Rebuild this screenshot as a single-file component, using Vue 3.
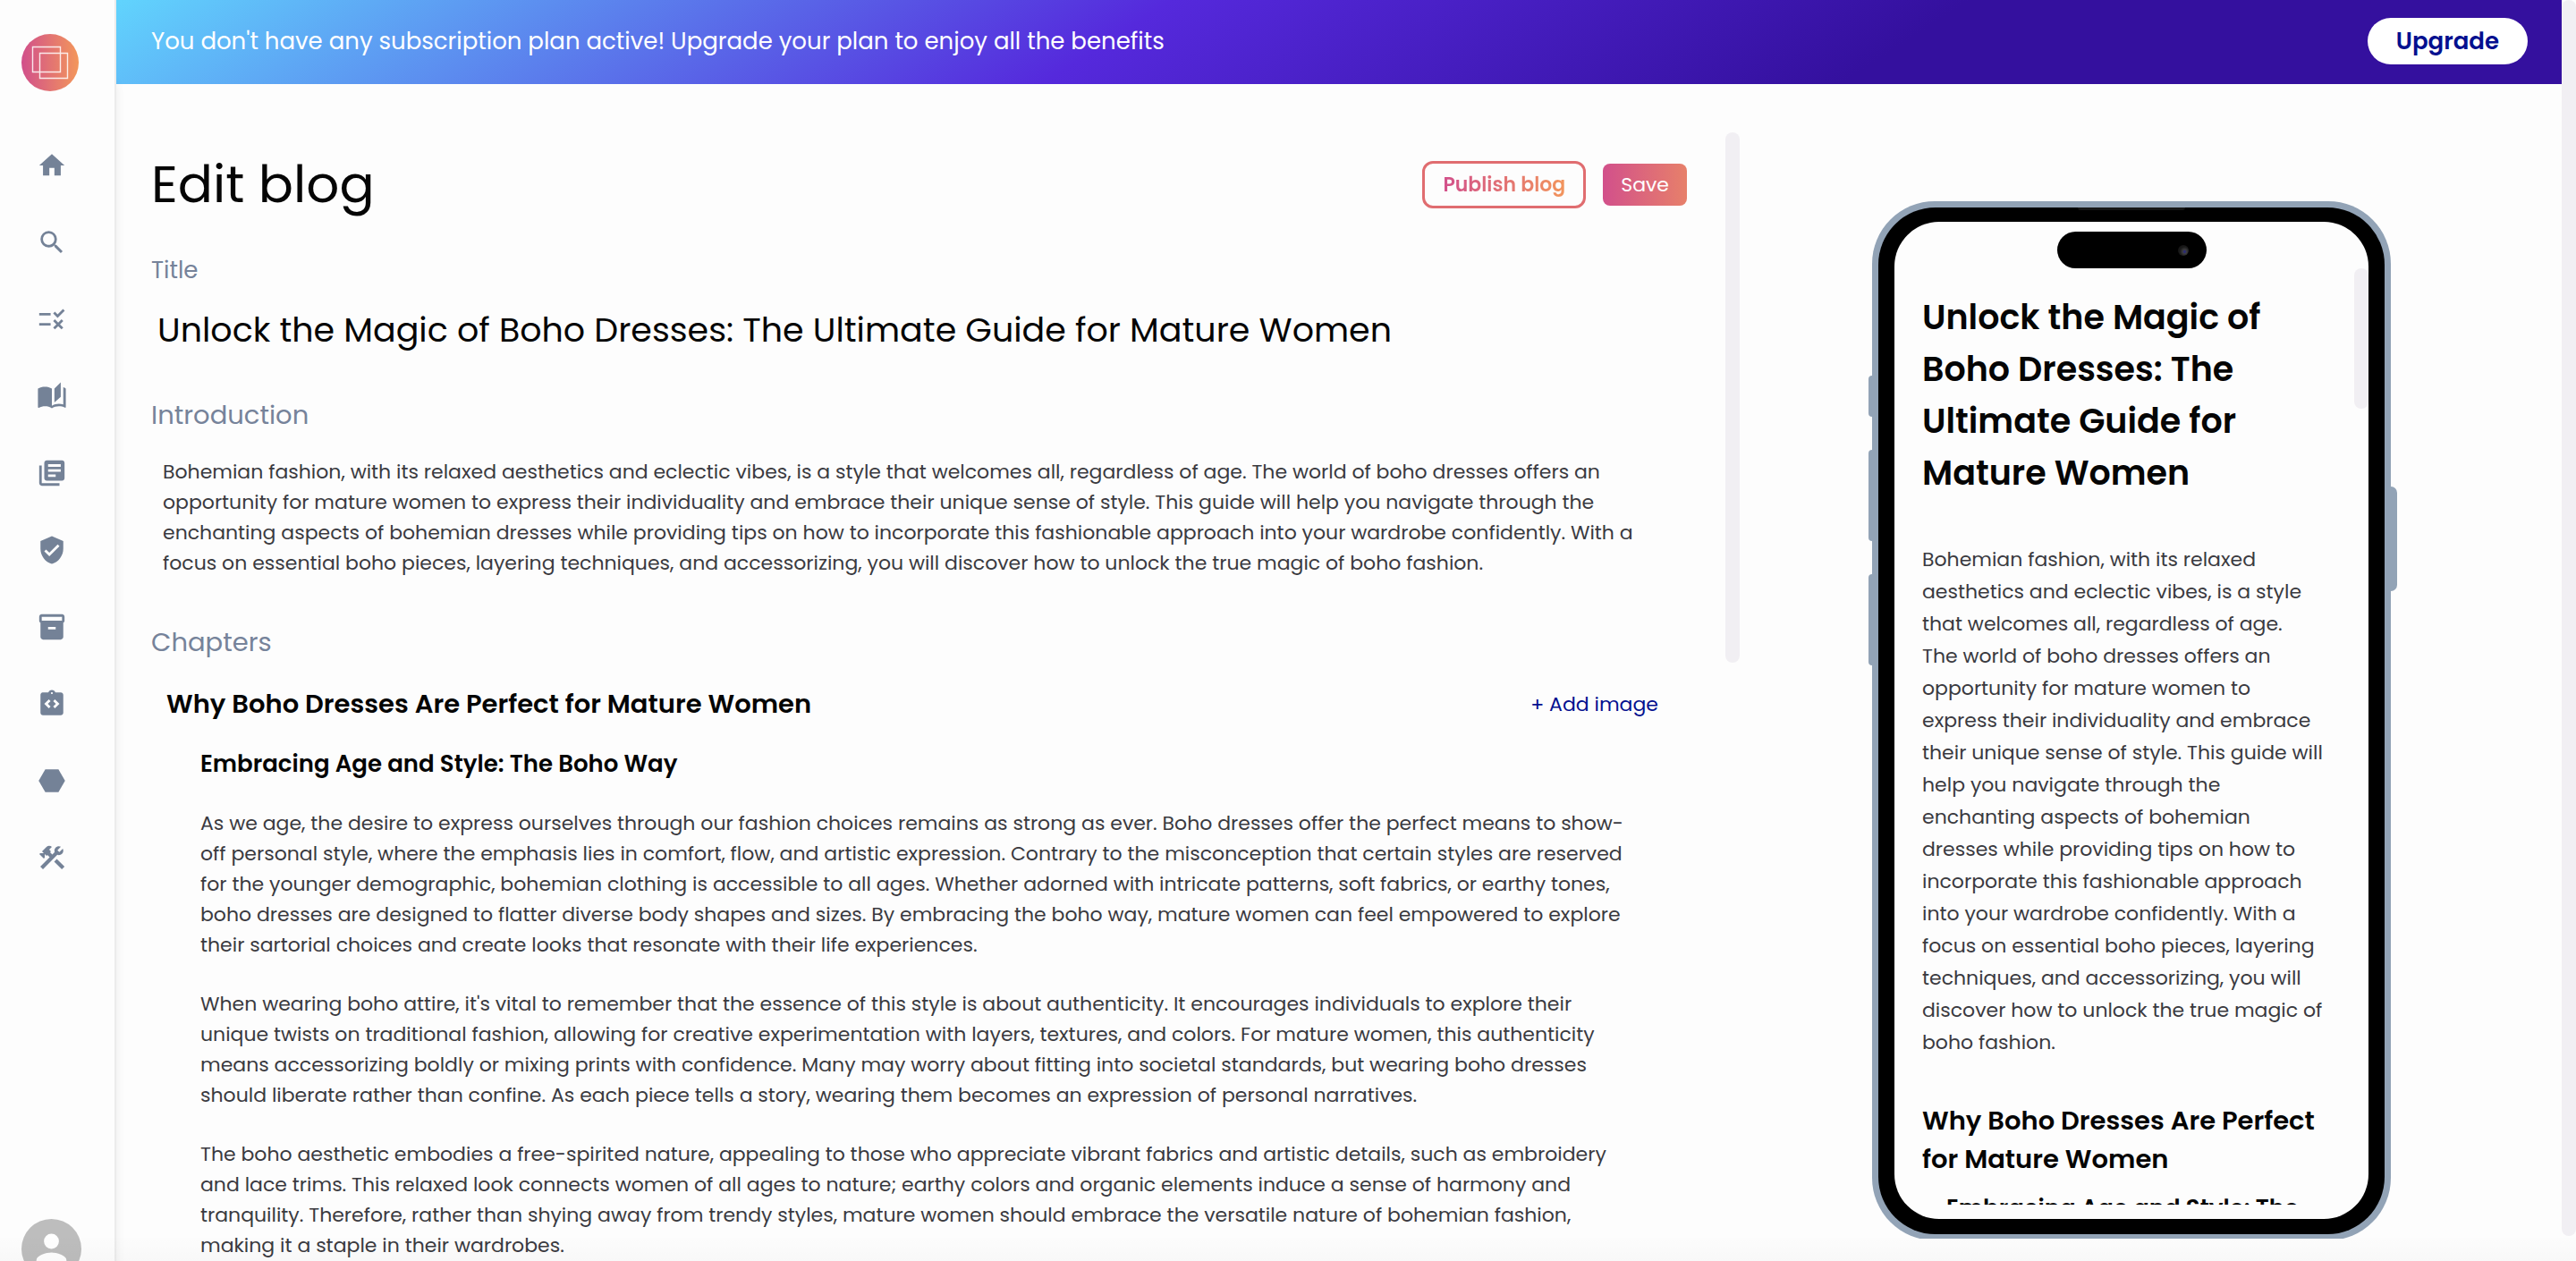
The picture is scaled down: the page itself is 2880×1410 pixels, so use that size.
<template>
  <div class="app">
    <aside class="sidebar">
      <a href="#" class="logo" aria-label="Dashboard">
        <svg viewBox="0 0 64 64">
          <defs>
            <linearGradient id="logo-bg" x1="0" x2="1" y1="0" y2="0">
              <stop offset="0" stop-color="#d14f8b" />
              <stop offset="1" stop-color="#f3975b" />
            </linearGradient>
          </defs>
          <circle cx="32" cy="32" r="32" fill="url(#logo-bg)" />
          <path
            d="M12.5 14.5h31v28h-31zM20.5 21.5h31v28h-31z"
            fill="none"
            stroke="#fff"
            stroke-opacity=".85"
            stroke-width="1.4"
          />
        </svg>
      </a>

      <nav class="nav">
        <a v-for="item in navItems" :key="item.name" href="#" class="nav-link" :aria-label="item.name">
          <svg viewBox="0 0 24 24"><path :d="item.icon" /></svg>
        </a>
      </nav>

      <button type="button" class="avatar" aria-label="Account">
        <svg viewBox="0 0 67 67">
          <circle cx="33.5" cy="33.5" r="33.5" fill="#bdbdbd" />
          <circle cx="33.5" cy="25" r="8.4" fill="#fff" />
          <path d="M16.7 46c0-5.6 11.2-8.6 16.8-8.6s16.8 3 16.8 8.6v4.2H16.7z" fill="#fff" />
        </svg>
      </button>
    </aside>

    <div class="page">
      <header class="banner">
        <p>You don't have any subscription plan active! Upgrade your plan to enjoy all the benefits</p>
        <button type="button" class="upgrade">Upgrade</button>
      </header>

      <main class="content">
        <section class="editor">
          <form class="form" @submit.prevent>
            <div class="form-head">
              <h1>Edit blog</h1>
              <div class="actions">
                <button type="button" class="publish"><span>Publish blog</span></button>
                <button type="submit" class="save">Save</button>
              </div>
            </div>

            <label for="title" class="label-small">Title</label>
            <input id="title" v-model="title" type="text" class="title-input" />

            <label for="intro" class="label">Introduction</label>
            <textarea id="intro" v-model="intro" rows="4" class="intro-input"></textarea>

            <h2 class="label chapters-label">Chapters</h2>
            <article v-for="chapter in chapters" :key="chapter.title" class="chapter">
              <div class="chapter-head">
                <h3>{{ chapter.title }}</h3>
                <button type="button" class="add-image">+ Add image</button>
              </div>
              <div class="chapter-body">
                <h4>{{ chapter.subtitle }}</h4>
                <p v-for="(text, index) in chapter.paragraphs" :key="index">{{ text }}</p>
              </div>
            </article>
          </form>
          <div class="thumb editor-thumb"></div>
        </section>

        <section class="preview">
          <div class="phone">
            <span class="side-button mute"></span>
            <span class="side-button volume-up"></span>
            <span class="side-button volume-down"></span>
            <span class="side-button power"></span>
            <div class="bezel">
              <span class="speaker"></span>
              <div class="screen">
                <div class="island"><span class="camera"></span></div>
                <div class="screen-scroll">
                  <div class="post">
                    <h2>{{ title }}</h2>
                    <p>{{ previewIntro }}</p>
                    <template v-for="chapter in chapters" :key="chapter.title">
                      <h3>{{ chapter.title }}</h3>
                      <h4>{{ chapter.subtitle }}</h4>
                    </template>
                  </div>
                  <div class="thumb screen-thumb"></div>
                </div>
              </div>
            </div>
          </div>
        </section>
      </main>
    </div>

    <div class="thumb page-thumb"></div>
    <div class="bottom-fade"></div>
  </div>
</template>

<script setup>
import { ref, computed } from 'vue';

const navItems = [
  { name: 'Home', icon: 'M10 20v-6h4v6h5v-8h3L12 3 2 12h3v8z' },
  {
    name: 'Search',
    icon: 'M15.5 14h-.79l-.28-.27A6.471 6.471 0 0 0 16 9.5 6.5 6.5 0 1 0 9.5 16c1.61 0 3.09-.59 4.23-1.57l.27.28v.79l5 4.99L20.49 19l-4.99-5zm-6 0C7.01 14 5 11.99 5 9.5S7.01 5 9.5 5 14 7.01 14 9.5 11.99 14 9.5 14z'
  },
  {
    name: 'Rules',
    icon: 'M16.54 11 13 7.46l1.41-1.41 2.12 2.12 4.24-4.24 1.41 1.41L16.54 11zM11 7H2v2h9V7zm10 6.41L19.59 12 17 14.59 14.41 12 13 13.41 15.59 16 13 18.59 14.41 20 17 17.41 19.59 20 21 18.59 18.41 16 21 13.41zM11 15H2v2h9v-2z'
  },
  {
    name: 'Stories',
    icon: 'M19 1l-5 5v11l5-4.5V1zM1 6v14.65c0 .25.25.5.5.5.1 0 .15-.05.25-.05C3.1 20.45 5.05 20 6.5 20c1.95 0 4.05.4 5.5 1.5V6c-1.45-1.1-3.55-1.5-5.5-1.5S2.45 4.9 1 6zm22 13.5V6c-.6-.45-1.25-.75-2-1v13.5c-1.1-.35-2.3-.5-3.5-.5-1.7 0-4.15.65-5.5 1.5v2c1.35-.85 3.8-1.5 5.5-1.5 1.65 0 3.35.3 4.75 1.05.1.05.15.05.25.05.25 0 .5-.25.5-.5v-1.1z'
  },
  {
    name: 'Library',
    icon: 'M4 6H2v14c0 1.1.9 2 2 2h14v-2H4V6zm16-4H8c-1.1 0-2 .9-2 2v12c0 1.1.9 2 2 2h12c1.1 0 2-.9 2-2V4c0-1.1-.9-2-2-2zm-1 9H9V9h10v2zm-4 4H9v-2h6v2zm4-8H9V5h10v2z'
  },
  {
    name: 'Checks',
    icon: 'M12 1L3 5v6c0 5.55 3.84 10.74 9 12 5.16-1.26 9-6.45 9-12V5l-9-4zm-2 16l-4-4 1.41-1.41L10 14.17l6.59-6.59L18 9l-8 8z'
  },
  {
    name: 'Inventory',
    icon: 'M20 2H4c-1 0-2 .9-2 2v3.01c0 .72.43 1.34 1 1.69V20c0 1.1 1.1 2 2 2h14c.9 0 2-.9 2-2V8.7c.57-.35 1-.97 1-1.69V4c0-1.1-1-2-2-2zm-5 12H9v-2h6v2zm5-7H4V4h16v3z'
  },
  {
    name: 'Integrations',
    icon: 'M19 3h-4.18C14.4 1.84 13.3 1 12 1c-1.3 0-2.4.84-2.82 2H5c-.14 0-.27.01-.4.04-.39.08-.74.28-1.01.55-.18.18-.33.4-.43.64C3.06 4.46 3 4.72 3 5v14c0 1.1.9 2 2 2h14c1.1 0 2-.9 2-2V5c0-1.1-.9-2-2-2zm-8 11.17-1.41 1.42L6 12l3.59-3.59L11 9.83 8.83 12 11 14.17zm1-9.92c-.41 0-.75-.34-.75-.75s.34-.75.75-.75.75.34.75.75-.34.75-.75.75zm2.41 11.34L13 14.17 15.17 12 13 9.83l1.41-1.42L18 12l-3.59 3.59z'
  },
  { name: 'Modules', icon: 'M17.2 3H6.8l-5.2 9 5.2 9h10.4l5.2-9z' },
  {
    name: 'Tools',
    icon: 'M13.78 15.17l2.12-2.12 6.08 6.08-2.12 2.12zM17.5 10c1.93 0 3.5-1.57 3.5-3.5 0-.58-.16-1.12-.41-1.6l-2.7 2.7-1.49-1.49 2.7-2.7C18.62 3.16 18.08 3 17.5 3 15.57 3 14 4.57 14 6.5c0 .41.08.8.21 1.16l-1.85 1.85-1.78-1.78.71-.71-1.41-1.41L12 3.49c-1.17-1.17-3.07-1.17-4.24 0L4.22 7.03l1.41 1.41H2.81l-.71.71 3.54 3.54.71-.71V9.15l1.41 1.41.71-.71 1.78 1.78-7.41 7.41 2.12 2.12L16.34 9.79c.36.13.75.21 1.16.21z'
  }
];

const title = ref('Unlock the Magic of Boho Dresses: The Ultimate Guide for Mature Women');

const intro = ref(
  `Bohemian fashion, with its relaxed aesthetics and eclectic vibes, is a style that welcomes all, regardless of age. The world of boho dresses offers an
opportunity for mature women to express their individuality and embrace their unique sense of style. This guide will help you navigate through the
enchanting aspects of bohemian dresses while providing tips on how to incorporate this fashionable approach into your wardrobe confidently. With a
focus on essential boho pieces, layering techniques, and accessorizing, you will discover how to unlock the true magic of boho fashion.`
);

// the phone wraps the text itself, only the opening sentence keeps its own line
const previewIntro = computed(() => intro.value.replace(/\n/g, ' ').replace('. ', '.\n'));

const chapters = ref([
  {
    title: 'Why Boho Dresses Are Perfect for Mature Women',
    subtitle: 'Embracing Age and Style: The Boho Way',
    paragraphs: [
      `As we age, the desire to express ourselves through our fashion choices remains as strong as ever. Boho dresses offer the perfect means to show-
off personal style, where the emphasis lies in comfort, flow, and artistic expression. Contrary to the misconception that certain styles are reserved
for the younger demographic, bohemian clothing is accessible to all ages. Whether adorned with intricate patterns, soft fabrics, or earthy tones,
boho dresses are designed to flatter diverse body shapes and sizes. By embracing the boho way, mature women can feel empowered to explore
their sartorial choices and create looks that resonate with their life experiences.`,
      `When wearing boho attire, it's vital to remember that the essence of this style is about authenticity. It encourages individuals to explore their
unique twists on traditional fashion, allowing for creative experimentation with layers, textures, and colors. For mature women, this authenticity
means accessorizing boldly or mixing prints with confidence. Many may worry about fitting into societal standards, but wearing boho dresses
should liberate rather than confine. As each piece tells a story, wearing them becomes an expression of personal narratives.`,
      `The boho aesthetic embodies a free-spirited nature, appealing to those who appreciate vibrant fabrics and artistic details, such as embroidery
and lace trims. This relaxed look connects women of all ages to nature; earthy colors and organic elements induce a sense of harmony and
tranquility. Therefore, rather than shying away from trendy styles, mature women should embrace the versatile nature of bohemian fashion,
making it a staple in their wardrobes.`
    ]
  }
]);
</script>

<style>
body {
  background: #fdfdfd;
  overflow: hidden;
}
</style>

<style scoped>
.app {
  position: relative;
  display: flex;
  height: 100vh;
  overflow: hidden;
  color: #050505;
  font-family: Poppins, Inter, sans-serif;
}

.app * {
  box-sizing: border-box;
}

h1,
h2,
h3,
h4,
p {
  margin: 0;
}

button,
input,
textarea {
  margin: 0;
  padding: 0;
  border: 0;
  background: none;
  color: inherit;
  font: inherit;
}

button {
  cursor: pointer;
}

svg {
  display: block;
  width: 100%;
  height: 100%;
}

/* Sidebar */
.sidebar {
  z-index: 1;
  display: flex;
  flex: none;
  flex-direction: column;
  width: 130px;
  padding: 38px 24px 0;
  border-right: 2px solid #ececec;
  background: #fdfdfd;
  box-shadow: 0 94px 10px rgba(0, 0, 0, 0.08);
}

.logo {
  flex: none;
  width: 64px;
  height: 64px;
}

.nav {
  display: flex;
  flex-direction: column;
  gap: 52px;
  margin-top: 66px;
  padding-left: 17px;
}

.nav-link {
  width: 34px;
  height: 34px;
  fill: #748297;
}

.avatar {
  flex: none;
  width: 67px;
  height: 67px;
  margin-top: auto;
  margin-bottom: -20px;
}

/* Page */
.page {
  display: flex;
  flex: 1;
  flex-direction: column;
  min-width: 0;
}

.banner {
  display: flex;
  flex: none;
  align-items: center;
  justify-content: space-between;
  height: 94px;
  padding: 0 38px 2px 39px;
  background: linear-gradient(147deg, #61d4fd 0%, #5529dc 41%, #34109e 72%);
  color: #fff;
  font-size: 26px;
}

.upgrade {
  height: 52px;
  padding: 0 32px;
  border-radius: 26px;
  background: #fff;
  color: #04108f;
  font-weight: 600;
}

.content {
  display: grid;
  flex: 1;
  grid-template-columns: 1815fr 919fr;
  min-height: 0;
}

.thumb {
  flex: none;
  width: 16px;
  border-radius: 8px;
  background: #f1eff3;
}

/* Editor */
.editor {
  display: flex;
  justify-content: space-between;
  gap: 43px;
  min-height: 0;
  padding: 54px 0 0 39px;
  overflow: hidden;
}

.editor-thumb {
  height: 47%;
}

.form {
  flex: 1;
  min-width: 0;
  padding-top: 18px;
}

.form-head {
  display: flex;
  align-items: center;
  justify-content: space-between;
}

h1 {
  font-size: 58px;
  font-weight: 400;
  line-height: 80px;
}

.actions {
  display: flex;
  align-items: center;
  gap: 19px;
  font-size: 22px;
}

.publish {
  height: 53px;
  padding: 0 20px;
  border: 3px solid #e06d70;
  border-radius: 12px;
  font-weight: 600;
}

.publish span {
  background: linear-gradient(90deg, #d2508b, #f2955c);
  background-clip: text;
  color: transparent;
}

.save {
  height: 47px;
  padding: 0 20px;
  border-radius: 8px;
  background: linear-gradient(90deg, #d2508b, #e7806a);
  color: #fff;
}

.label,
.label-small {
  display: block;
  color: #76839a;
  font-size: 29px;
  font-weight: 400;
  line-height: 40px;
}

.label-small {
  margin-top: 38px;
  font-size: 26px;
  line-height: 36px;
}

.title-input {
  display: block;
  width: 100%;
  height: 56px;
  margin: 20px 0 48px;
  padding-left: 7px;
  font-size: 38px;
}

.intro-input {
  display: block;
  width: 100%;
  height: 136px;
  margin-top: 27px;
  padding-left: 13px;
  overflow: hidden;
  color: #3a3a40;
  font-size: 22px;
  line-height: 34px;
  resize: none;
  white-space: pre;
}

.chapters-label {
  margin-top: 51px;
}

.chapter {
  margin-top: 29px;
  padding: 0 32px 0 17px;
}

.chapter-head {
  display: flex;
  align-items: center;
  justify-content: space-between;
}

.chapter h3 {
  font-size: 29px;
  font-weight: 600;
  line-height: 40px;
}

.add-image {
  color: #04108f;
  font-size: 22px;
}

.chapter-body {
  padding-left: 38px;
}

.chapter h4 {
  margin-top: 29px;
  font-size: 26px;
  font-weight: 600;
  line-height: 36px;
}

.chapter p {
  margin-top: 32px;
  color: #3a3a40;
  font-size: 22px;
  line-height: 34px;
  white-space: pre;
}

/* Phone preview */
.preview {
  display: flex;
  justify-content: center;
  min-height: 0;
  margin-bottom: 25px;
  padding: 131px 43px 0 0;
  overflow: hidden;
}

.phone {
  position: relative;
  width: 580px;
  margin-bottom: -2px;
  padding: 7px;
  border-radius: 70px;
  background: #92a3b6;
}

.side-button {
  position: absolute;
  left: -4px;
  width: 8px;
  border-radius: 4px 0 0 4px;
  background: #92a3b6;
}

.mute {
  top: 195px;
  height: 46px;
}

.volume-up {
  top: 278px;
  height: 102px;
}

.volume-down {
  top: 417px;
  height: 102px;
}

.power {
  top: 319px;
  right: -7px;
  left: auto;
  width: 11px;
  height: 117px;
  border-radius: 0 7px 7px 0;
}

.bezel {
  position: relative;
  height: 100%;
  padding: 16px 18px 17px;
  border-radius: 64px;
  background: #000;
}

.speaker {
  position: absolute;
  top: 0;
  left: 50%;
  width: 120px;
  height: 3px;
  margin-left: -60px;
  border-radius: 0 0 3px 3px;
  background: #161616;
}

.screen {
  display: flex;
  flex-direction: column;
  height: 100%;
  padding: 11px 0 16px;
  border-radius: 50px;
  background: #fdfdfd;
}

.island {
  display: flex;
  flex: none;
  align-items: center;
  justify-content: flex-end;
  align-self: center;
  width: 167px;
  height: 41px;
  padding-right: 20px;
  border-radius: 21px;
  background: #000;
}

.camera {
  width: 12px;
  height: 12px;
  border-radius: 50%;
  background: radial-gradient(circle at 62% 62%, #2b2b78 0 8%, #3c3c3e 22%, #1b1b1b 50%, #0c0c0c 100%);
}

.screen-scroll {
  display: flex;
  flex: 1;
  min-height: 0;
  overflow: hidden;
}

.post {
  flex: 1;
  min-width: 0;
  padding: 26px 32px 0 31px;
}

.post h2 {
  font-size: 38px;
  font-weight: 600;
  line-height: 58px;
}

.post p {
  margin: 50px 0 48px;
  color: #3a3a40;
  font-size: 22px;
  line-height: 36px;
  white-space: pre-line;
}

.post h3 {
  font-size: 29px;
  font-weight: 600;
  line-height: 43px;
}

.post h4 {
  margin-top: 12px;
  padding-left: 27px;
  font-size: 26px;
  font-weight: 600;
  line-height: 42px;
}

.screen-thumb {
  height: 15%;
}

.page-thumb {
  height: 98%;
}

.bottom-fade {
  position: absolute;
  right: 0;
  bottom: 0;
  left: 0;
  z-index: 2;
  height: 26px;
  background: linear-gradient(rgba(0, 0, 0, 0.005), rgba(0, 0, 0, 0.02));
  pointer-events: none;
}
</style>
